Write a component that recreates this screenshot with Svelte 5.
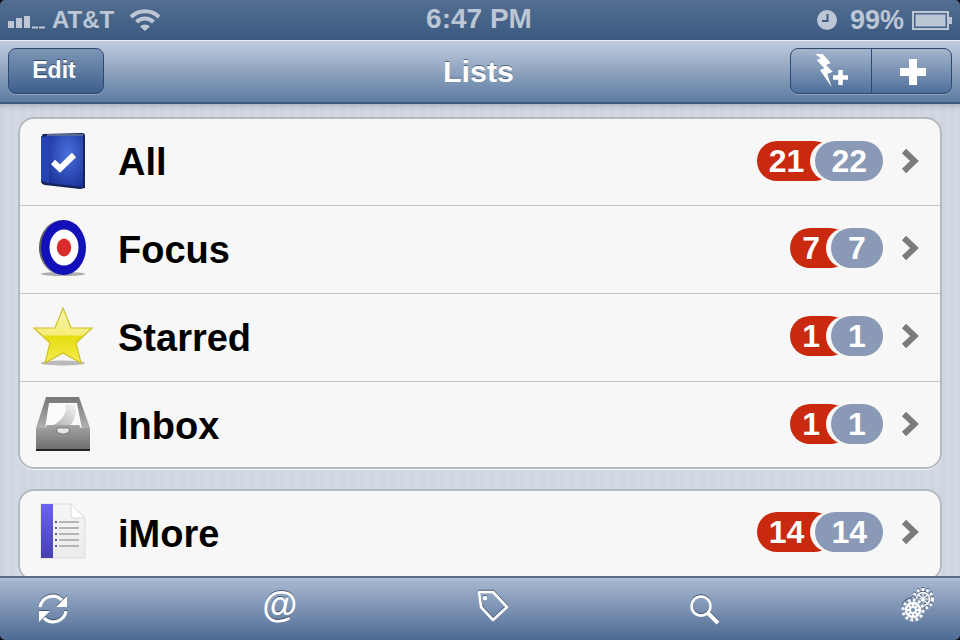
<script>
  const groups = [
    [
      { name: 'All', icon: 'book', red: 21, grey: 22 },
      { name: 'Focus', icon: 'target', red: 7, grey: 7 },
      { name: 'Starred', icon: 'star', red: 1, grey: 1 },
      { name: 'Inbox', icon: 'inbox', red: 1, grey: 1 }
    ],
    [{ name: 'iMore', icon: 'doc', red: 14, grey: 14 }]
  ];
</script>

<div class="phone">
  <div class="status">
    <div class="status-left">
      <svg class="signal" width="40" height="14" viewBox="0 0 40 14">
        <rect x="0" y="6" width="6" height="7" />
        <rect x="8" y="3" width="6" height="10" />
        <rect x="16" y="1" width="6" height="12" />
        <rect x="24" y="11.5" width="6" height="2" />
        <rect x="31" y="11.5" width="6" height="2" />
      </svg>
      <span class="carrier">AT&amp;T</span>
      <svg class="wifi" width="32" height="22" viewBox="0 0 32 22">
        <path d="M2 8 A20 20 0 0 1 30 8" />
        <path d="M7.5 13 A12 12 0 0 1 24.5 13" />
        <path class="wifi-dot" d="M11 17.5 L16 22 L21 17.5 A7 7 0 0 0 11 17.5 Z" />
      </svg>
    </div>
    <div class="clock-text">6:47 PM</div>
    <div class="status-right">
      <svg width="20" height="20" viewBox="0 0 20 20">
        <circle cx="10" cy="10" r="10" fill="#bcc6d5" />
        <path d="M10.5 4 V11 H5" fill="none" stroke="#3f5b80" stroke-width="2" />
      </svg>
      <span class="percent">99%</span>
      <svg width="41" height="20" viewBox="0 0 41 20">
        <rect x="1" y="2" width="35" height="17" fill="none" stroke="#bcc6d5" stroke-width="2" />
        <rect x="3.5" y="4.5" width="30" height="12" fill="#bcc6d5" />
        <rect x="37" y="7" width="3" height="7" fill="#bcc6d5" />
      </svg>
    </div>
  </div>

  <div class="nav">
    <button class="edit">Edit</button>
    <h1>Lists</h1>
    <div class="seg">
      <button class="seg-btn bolt">
        <svg width="40" height="38" viewBox="0 0 40 38">
          <path d="M4 2 H11.7 L19.7 11 L15 13 L21.7 19.7 L16.3 22 L20.7 35.3 L9 18 L13.3 16.3 L5.7 8 L10 6.3 Z" fill="#fff" />
          <path d="M27.2 18 H31.8 V23.2 H37 V27.8 H31.8 V33 H27.2 V27.8 H22 V23.2 H27.2 Z" fill="#fff" />
        </svg>
      </button>
      <button class="seg-btn plus">
        <svg width="28" height="28" viewBox="0 0 28 28">
          <path d="M10 1 H18 V10 H27 V18 H18 V27 H10 V18 H1 V10 H10 Z" fill="#fff" />
        </svg>
      </button>
    </div>
  </div>

  <div class="content">
    {#each groups as rows}
      <div class="card">
        {#each rows as row}
          <div class="row">
            <svg class="icon" width="60" height="60" viewBox="0 0 60 60">
              {#if row.icon === 'book'}
                <defs>
                  <radialGradient id="bookg" cx="0.55" cy="0.35" r="0.75">
                    <stop offset="0" stop-color="#4a70dc" />
                    <stop offset="1" stop-color="#1a3199" />
                  </radialGradient>
                </defs>
                <path d="M10 3 L49 2 Q52 2 52 5 V57 L47 58 L12 54 Q8 53 8 50 V6 Z" fill="#14245f" />
                <path d="M16 5 H50 V56 L16 52 Z" fill="url(#bookg)" />
                <path d="M14 3 H50 V5 H16 V52 L14 52 Z" fill="#c8cfe4" opacity="0.4" />
                <path d="M8 6 L16 5 V52 L8 50 Z" fill="#2444b0" />
                <path d="M20 31 L27 37.5 L41 24" fill="none" stroke="#fff" stroke-width="6" />
              {:else if row.icon === 'target'}
                <defs>
                  <linearGradient id="rimg" x1="0" y1="0" x2="1" y2="0">
                    <stop offset="0" stop-color="#555" />
                    <stop offset="0.5" stop-color="#ccc" />
                    <stop offset="1" stop-color="#333" />
                  </linearGradient>
                </defs>
                <ellipse cx="30" cy="56" rx="22" ry="2" fill="#000" opacity="0.3" />
                <ellipse cx="29" cy="29.5" rx="23" ry="27.5" fill="url(#rimg)" />
                <ellipse cx="30.5" cy="29.5" rx="22.5" ry="27.5" fill="#1210b8" />
                <ellipse cx="31" cy="29.5" rx="14.5" ry="18" fill="#fff" />
                <ellipse cx="31" cy="29.5" rx="7.2" ry="9" fill="#d92d2d" />
              {:else if row.icon === 'star'}
                <defs>
                  <linearGradient id="starg" x1="0" y1="0" x2="0" y2="1">
                    <stop offset="0" stop-color="#f8f4b0" />
                    <stop offset="0.48" stop-color="#f5ee7a" />
                    <stop offset="0.52" stop-color="#e6dc10" />
                    <stop offset="1" stop-color="#f5ee50" />
                  </linearGradient>
                </defs>
                <ellipse cx="30" cy="57" rx="22" ry="2.5" fill="#000" opacity="0.25" />
                <path d="M30 2 L38 22 H59 L43 37 L48 57 L30 47 L12 57 L17 37 L1 22 H22 Z" fill="url(#starg)" stroke="#d0c020" stroke-width="1.2" />
              {:else if row.icon === 'inbox'}
                <defs>
                  <linearGradient id="curlg" x1="0" y1="1" x2="1" y2="0">
                    <stop offset="0" stop-color="#a8a8a8" />
                    <stop offset="0.6" stop-color="#d4d4d4" />
                    <stop offset="1" stop-color="#f8f8f8" />
                  </linearGradient>
                  <linearGradient id="frontg" x1="0" y1="0" x2="0" y2="1">
                    <stop offset="0" stop-color="#a5a5a5" />
                    <stop offset="1" stop-color="#6d6d6d" />
                  </linearGradient>
                  <linearGradient id="wallg" x1="0" y1="0" x2="0" y2="1">
                    <stop offset="0" stop-color="#777" />
                    <stop offset="1" stop-color="#b0b0b0" />
                  </linearGradient>
                </defs>
                <path d="M13 3 H46 L57 34 H3 Z" fill="url(#wallg)" />
                <path d="M16 9 H44 L49 35 H12 Z" fill="#fbfbfb" />
                <path d="M33 10 Q35 25 15 34 H32 Q44 30 43 11 Z" fill="url(#curlg)" />
                <path d="M3 34 H12 L14 31 H46 L48 34 H57 V56 H3 Z" fill="url(#frontg)" />
                <path d="M24 34 H36 V38 Q30 42 24 38 Z" fill="#e8e8e8" stroke="#666" stroke-width="0.7" />
                <rect x="3" y="55" width="54" height="2" fill="#222" />
              {:else}
                <defs>
                  <linearGradient id="bandg" x1="0" y1="0" x2="0" y2="1">
                    <stop offset="0" stop-color="#6a63f5" />
                    <stop offset="1" stop-color="#463fae" />
                  </linearGradient>
                  <linearGradient id="pageg" x1="0" y1="0" x2="0" y2="1">
                    <stop offset="0" stop-color="#f6f6f6" />
                    <stop offset="1" stop-color="#ebebeb" />
                  </linearGradient>
                </defs>
                <path d="M8 2 H38 L52 16 V56 H8 Z" fill="url(#pageg)" stroke="#d0d0d0" stroke-width="0.7" />
                <path d="M38 2 L52 16 H41 Q38 16 38 13 Z" fill="#fff" stroke="#ccc" stroke-width="0.7" />
                <rect x="8" y="2" width="12" height="54" fill="url(#bandg)" />
                {#each [19, 25, 31, 37, 43] as y}
                  <rect x="22" {y} width="2" height="2" fill="#5a52b8" />
                  <rect x="26" {y} width="20" height="2" fill="#b5b5b5" />
                {/each}
              {/if}
            </svg>
            <span class="name">{row.name}</span>
            <div class="badges">
              <span class="red">{row.red}</span>
              <span class="grey">{row.grey}</span>
            </div>
            <svg class="chevron" width="18" height="26" viewBox="0 0 18 26">
              <path d="M3 3 L13.5 13 L3 23" />
            </svg>
          </div>
        {/each}
      </div>
    {/each}
  </div>

  <div class="toolbar">
    <svg class="tool" width="34" height="34" viewBox="0 0 34 34">
      <path d="M4 15 A13 13 0 0 1 26 8" fill="none" stroke="#fff" stroke-width="3.2" />
      <path d="M31 4 V15 H20 Z" fill="#fff" />
      <path d="M30 19 A13 13 0 0 1 8 26" fill="none" stroke="#fff" stroke-width="3.2" />
      <path d="M3 30 V19 H14 Z" fill="#fff" />
    </svg>
    <span class="at">@</span>
    <svg class="tool tag" width="34" height="34" viewBox="0 0 34 34">
      <path d="M3 3 H17 L31 18 L17 31 L5 18 Z" fill="none" stroke="#fff" stroke-width="2.6" stroke-linejoin="round" />
      <circle cx="9" cy="9" r="2.2" fill="#fff" />
    </svg>
    <svg class="tool" width="34" height="34" viewBox="0 0 34 34">
      <circle cx="13" cy="14" r="9.5" fill="none" stroke="#fff" stroke-width="2.6" />
      <path d="M20 21 L30 31" fill="none" stroke="#fff" stroke-width="4" />
    </svg>
    <svg class="tool gears" width="36" height="36" viewBox="0 0 36 36">
      <g fill="none" stroke="#fff">
        <circle cx="23" cy="12" r="9.5" stroke-width="3" stroke-dasharray="2.4 2.4" />
        <circle cx="23" cy="12" r="6.5" stroke-width="1.6" />
        <path d="M23 6 V18 M17 12 H29 M19 8 L27 16 M27 8 L19 16" stroke-width="1.2" />
        <circle cx="13" cy="23" r="12" fill="#7d93b2" stroke="none" />
        <circle cx="13" cy="23" r="10" stroke-width="3" stroke-dasharray="2.6 2.6" />
        <circle cx="13" cy="23" r="7" stroke-width="2.4" />
        <path d="M13 17 V29 M7 23 H19 M9 19 L17 27 M17 19 L9 27" stroke-width="2" />
        <circle cx="13" cy="23" r="3" fill="#7d93b2" stroke-width="1.8" />
      </g>
    </svg>
  </div>
</div>

<style>
  :global(body) {
    background: #000;
  }

  .phone {
    width: 960px;
    height: 640px;
    display: flex;
    flex-direction: column;
    overflow: hidden;
    border-radius: 5px;
    font-family: 'Liberation Sans', Arial, sans-serif;
    font-weight: 700;
  }

  .status {
    height: 40px;
    flex: none;
    display: grid;
    grid-template-columns: 1fr auto 1fr;
    align-items: center;
    padding: 0 7px 0 8px;
    box-sizing: border-box;
    background: linear-gradient(#536e92, #3b5a80);
    color: #bcc6d5;
  }

  .status-left,
  .status-right {
    display: flex;
    align-items: center;
  }

  .status-right {
    justify-content: flex-end;
  }

  .signal {
    fill: #bcc6d5;
    margin-top: 3px;
  }

  .carrier {
    font-size: 24px;
    margin-left: 4px;
  }

  .wifi {
    margin-left: 15px;
  }

  .wifi path {
    fill: none;
    stroke: #bcc6d5;
    stroke-width: 4;
  }

  .wifi .wifi-dot {
    fill: #bcc6d5;
    stroke: none;
  }

  .clock-text {
    font-size: 28px;
    padding: 0 3px 2px 0;
  }

  .percent {
    font-size: 27px;
    margin: 0 8px 0 13px;
  }

  .nav {
    height: 64px;
    flex: none;
    box-sizing: border-box;
    border-top: 1px solid #e6ebf2;
    border-bottom: 2px solid #3d5a80;
    display: flex;
    align-items: center;
    justify-content: space-between;
    padding: 0 8px 2px;
    position: relative;
    background: linear-gradient(#c0ccdd, #5d7ba1);
  }

  button {
    font-family: inherit;
    font-weight: 700;
    color: #fff;
    border: 0;
    padding: 0;
    background: none;
  }

  .edit {
    width: 96px;
    height: 46px;
    padding-right: 4px;
    font-size: 23px;
    border: 1px solid #2c4a70;
    border-radius: 8px;
    background: linear-gradient(#7d95b5, #3d5f8b);
    box-shadow: 0 1px 0 rgba(255, 255, 255, 0.25);
    text-shadow: 0 -1px 0 rgba(30, 50, 80, 0.7);
  }

  h1 {
    margin: 0;
    padding: 2px 3px 0 0;
    font-size: 30.4px;
    color: #fff;
    line-height: 1;
    position: absolute;
    left: 0;
    right: 0;
    text-align: center;
    text-shadow: 0 -1px 0 rgba(50, 70, 100, 0.7);
  }

  .seg {
    display: flex;
    width: 162px;
    height: 46px;
    box-sizing: border-box;
    border: 1px solid #2c4a70;
    border-radius: 8px;
    background: linear-gradient(#a5b5cc, #4e6f9a);
    box-shadow: 0 1px 0 rgba(255, 255, 255, 0.25);
    position: relative;
  }

  .seg-btn {
    display: flex;
    align-items: center;
    justify-content: center;
  }

  .bolt {
    flex: 0 0 80px;
  }

  .plus {
    flex: 1;
    padding: 3px 0 0 2px;
    border-left: 1px solid #2c4a70;
  }

  .content {
    flex: 1;
    min-height: 0;
    overflow: hidden;
    padding: 13px 18px 0;
    display: flex;
    flex-direction: column;
    gap: 20px;
    background-color: #d0d6e2;
    background-image: repeating-linear-gradient(90deg, #cfd5e1 0 5px, #d3d9e4 5px 10px);
    box-shadow: inset 0 5px 5px -3px rgba(40, 60, 90, 0.25);
  }

  .card {
    flex: none;
    border: 2px solid #b4b8bf;
    border-radius: 16px;
    background: #f7f7f7;
    box-shadow: 0 1px 0 rgba(255, 255, 255, 0.8);
  }

  .row {
    height: 88px;
    box-sizing: border-box;
    display: flex;
    align-items: center;
    padding: 0 21px 3px 13px;
    border-bottom: 1px solid #c6c6c6;
  }

  .row:first-child {
    height: 87px;
  }

  .row:last-child {
    border-bottom: 0;
    height: 85px;
    padding-bottom: 1px;
  }

  .card:last-child .row:last-child {
    height: 88px;
    padding-bottom: 6px;
  }

  .name {
    margin: 4px 0 0 25px;
    font-size: 38px;
    color: #000;
    flex: 1;
    text-shadow: 0 1px 0 #fff;
  }

  .badges {
    display: flex;
    font-size: 32px;
    color: #fff;
    line-height: 40px;
  }

  .red {
    background: #c9290f;
    border-radius: 20px;
    padding: 0 30px 0 12px;
    margin-right: -19px;
  }

  .grey {
    background: #8a99b5;
    border-radius: 20px;
    padding: 0 16px;
    min-width: 52px;
    box-sizing: border-box;
    text-align: center;
    box-shadow: -5px 0 0 #f7f7f7;
    position: relative;
  }

  .chevron {
    margin-left: 18px;
  }

  .chevron path {
    fill: none;
    stroke: #7b7b7b;
    stroke-width: 6;
  }

  .toolbar {
    height: 64px;
    flex: none;
    box-sizing: border-box;
    border-top: 2px solid #5b6c88;
    display: flex;
    align-items: center;
    justify-content: space-between;
    padding: 0 24px 0 36px;
    background: linear-gradient(#b3c2d8, #a5b6cf 5%, #4d6a92);
  }

  .tool {
    filter: drop-shadow(0 -1px 0 rgba(40, 55, 85, 0.7));
  }

  .tag {
    margin-bottom: 6px;
  }

  .gears {
    margin-bottom: 8px;
  }

  .at {
    font-size: 36px;
    color: #fff;
    line-height: 1;
    margin: 0 0 8px 14px;
    text-shadow: 0 -1px 0 rgba(40, 55, 85, 0.7);
  }
</style>
